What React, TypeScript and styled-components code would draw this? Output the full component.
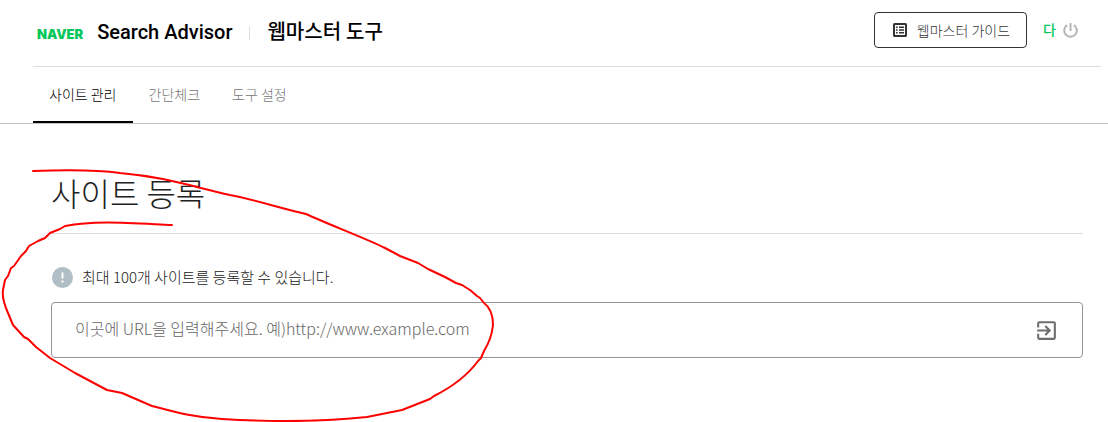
import React, { useState } from 'react';
import styled, { createGlobalStyle } from 'styled-components';
import { MdExitToApp } from 'react-icons/md';

const GlobalStyle = createGlobalStyle`
  *, *::before, *::after { box-sizing: border-box; }
  body {
    margin: 0;
    background: #fff;
    color: #212121;
    font-family: "Noto Sans CJK KR", sans-serif;
    font-weight: 300;
    font-size: 14px;
    line-height: 20px;
  }
  button, input { font: inherit; }
`;

const Page = styled.div`
  position: relative;
  min-height: 100vh;
  overflow: hidden;
`;

const Header = styled.header`
  display: flex;
  align-items: flex-start;
  justify-content: space-between;
  height: 67px;
  margin: 0 7px 0 33px;
  padding-top: 12px;
  border-bottom: 1px solid #dedede;
`;

const Brand = styled.a`
  display: flex;
  align-items: center;
  height: 40px;
  padding-left: 4px;
  color: #000;
  font-family: Roboto, "Noto Sans CJK KR", sans-serif;
  font-size: 20px;
  font-weight: 500;
  line-height: 28px;
  text-decoration: none;
`;

const Logo = styled.span`
  margin-right: 14px;
  padding-top: 3px;
  color: #03c75a;
  font-family: Inter, sans-serif;
  font-size: 13px;
  font-weight: 900;
`;

const Divider = styled.span`
  width: 1px;
  height: 14px;
  margin: 2px 17px 0;
  background: #dedede;
`;

const Tools = styled.div`
  display: flex;
  align-items: center;
  height: 36px;
  padding-right: 23px;
`;

const GuideButton = styled.button`
  display: flex;
  align-items: center;
  gap: 10px;
  height: 36px;
  margin-right: 16px;
  padding: 0 16px 1px 18px;
  border: 1px solid #333;
  border-radius: 4px;
  background: none;
  color: #333;
  white-space: nowrap;
`;

const User = styled.a`
  margin-right: 7px;
  padding-bottom: 2px;
  color: #03c75a;
  font-weight: 500;
  text-decoration: none;
`;

const IconButton = styled.button<{ $color: string }>`
  display: flex;
  flex: none;
  padding: 0;
  border: 0;
  background: none;
  color: ${({ $color }) => $color};
`;

const Tabs = styled.nav`
  display: flex;
  height: 57px;
  padding-left: 33px;
  border-bottom: 1px solid #c4c4c4;
`;

const Tab = styled.a<{ $active?: boolean }>`
  padding: 17px 16px 0;
  border-bottom: 2px solid ${({ $active }) => ($active ? '#000' : 'transparent')};
  color: ${({ $active }) => ($active ? '#000' : '#757575')};
  text-decoration: none;
`;

const Main = styled.main`
  padding: 47px 25px 64px 51px;
`;

const Title = styled.h1`
  margin: 0;
  padding-bottom: 19px;
  border-bottom: 1px solid #dedede;
  font-size: 32px;
  font-weight: 300;
  line-height: 43px;
`;

const Notice = styled.label`
  display: flex;
  align-items: center;
  gap: 9px;
  margin: 32px 0 14px 1px;
  font-size: 15px;
  line-height: 22px;
`;

const Field = styled.form`
  display: flex;
  align-items: center;
  height: 56px;
  padding: 0 23px;
  border: 1px solid #949494;
  border-radius: 4px;
`;

const UrlInput = styled.input`
  flex: 1;
  min-width: 0;
  padding: 0 0 4px;
  border: 0;
  outline: 0;
  background: none;
  color: #212121;
  font-size: 16px;
  &::placeholder { color: #666; opacity: 1; }
`;

const Marker = styled.svg`
  position: absolute;
  top: 0;
  left: 0;
  pointer-events: none;
`;

const tabs = ['사이트 관리', '간단체크', '도구 설정'];

export default function App() {
  const [url, setUrl] = useState('');
  return (
    <Page>
      <GlobalStyle />
      <Header>
        <Brand href="#">
          <Logo>NAVER</Logo>
          <span>Search Advisor</span>
          <Divider />
          <span>웹마스터 도구</span>
        </Brand>
        <Tools>
          <GuideButton type="button">
            <svg width="14" height="14" viewBox="0 0 14 14" fill="none" stroke="currentColor">
              <rect x="1" y="1" width="12" height="12" rx=".5" strokeWidth="2" />
              <path d="M3 4.2h1.6M3 7h1.6M3 9.8h1.6M6 4.2h5M6 7h5M6 9.8h5" strokeWidth="1.5" />
            </svg>
            웹마스터 가이드
          </GuideButton>
          <User href="#">다</User>
          <IconButton type="button" $color="#b5b5b5" aria-label="로그아웃">
            <svg width="15" height="15" viewBox="0 0 15 15" fill="none" stroke="currentColor" strokeWidth="2">
              <path d="M4 2.2a6.3 6.3 0 1 0 7 0M7.5 0v8" />
            </svg>
          </IconButton>
        </Tools>
      </Header>
      <Tabs>
        {tabs.map((name, i) => (
          <Tab key={name} href="#" $active={i === 0}>{name}</Tab>
        ))}
      </Tabs>
      <Main>
        <Title>사이트 등록</Title>
        <Notice htmlFor="site-url">
          <svg width="21" height="21" viewBox="0 0 21 21">
            <circle cx="10.5" cy="10.5" r="10.5" fill="#b0bec5" />
            <path d="M10.5 5.5v6M10.5 13.5v2" stroke="#fff" strokeWidth="2" />
          </svg>
          최대 100개 사이트를 등록할 수 있습니다.
        </Notice>
        <Field onSubmit={(e) => e.preventDefault()}>
          <UrlInput
            id="site-url"
            value={url}
            onChange={(e) => setUrl(e.target.value)}
            placeholder="이곳에 URL을 입력해주세요. 예)http://www.example.com"
          />
          <IconButton type="submit" $color="#6e6e6e" aria-label="등록">
            <MdExitToApp size={25} />
          </IconButton>
        </Field>
      </Main>
      <Marker width="500" height="422" viewBox="0 0 500 422" fill="none">
        <path
          d="M33 171C60 170 92 169 120 173C165 177 190 186 230 195C252 199 280 208 306 214C325 223 370 240 385 248L400 256L418 263L428 269L445 277L456 283L462 285L470 290L477 296L480 298L484 303C491 308 493 317 493 325C492 335 489 343 484 351L481 358L478 361C467 376 450 388 434 396L430 399L402 410L367 417C320 422 270 422 222 419C190 417 172 411 152 406L122 393L107 390L75 373L50 358L36 347L28 339L24 337L13 325L8 313C4 304 2 296 3 290L5 280L8 276L11 268L14 266L21 256L26 251L29 246L38 241L45 238L50 233L60 229L65 226C95 220 130 223 172 225"
          stroke="#f00"
          strokeWidth="2"
          strokeLinecap="round"
          strokeLinejoin="round"
        />
      </Marker>
    </Page>
  );
}
